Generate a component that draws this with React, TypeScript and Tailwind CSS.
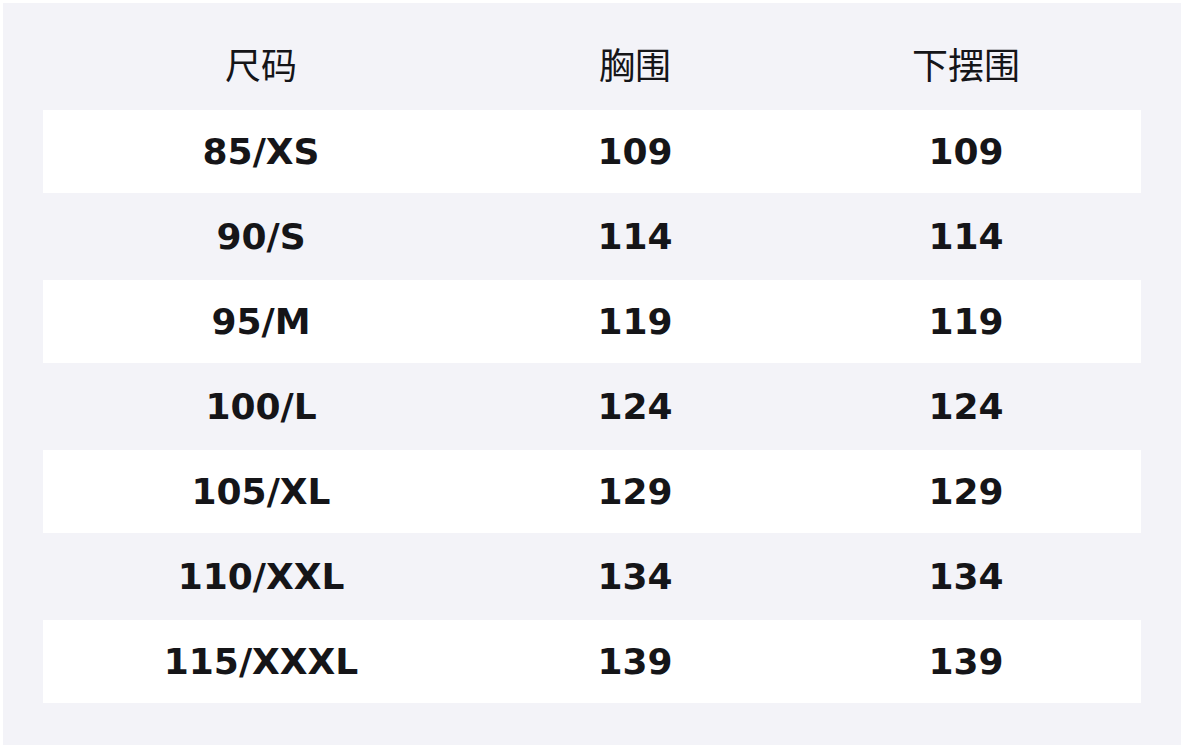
import React from "react";

const rows = [
  ["85/XS", "109", "109"],
  ["90/S", "114", "114"],
  ["95/M", "119", "119"],
  ["100/L", "124", "124"],
  ["105/XL", "129", "129"],
  ["110/XXL", "134", "134"],
  ["115/XXXL", "139", "139"],
];

export default function App() {
  return (
    <div
      className="w-[1184px] h-[748px] bg-white p-[3px]"
      style={{ fontFamily: '"DejaVu Sans", "Noto Sans CJK SC", sans-serif' }}
    >
      <div className="w-[1178px] h-[742px] bg-[#f3f3f8] px-[40px] text-[#151518]">
        <div className="grid grid-cols-[436px_312px_350px] h-[105px] items-center pt-[22px] text-[36px] leading-[54px]">
          <div className="text-center">尺码</div>
          <div className="text-center">胸围</div>
          <div className="text-center">下摆围</div>
        </div>
        <div className="flex flex-col gap-[2px] pt-[2px]">
          {rows.map((r, i) => (
            <div
              key={r[0]}
              className={`grid grid-cols-[436px_312px_350px] h-[83px] items-center text-[36px] font-bold ${
                i % 2 === 0 ? "bg-white" : "bg-[#f3f3f8]"
              }`}
            >
              <div className="text-center">{r[0]}</div>
              <div className="text-center">{r[1]}</div>
              <div className="text-center">{r[2]}</div>
            </div>
          ))}
        </div>
      </div>
    </div>
  );
}
